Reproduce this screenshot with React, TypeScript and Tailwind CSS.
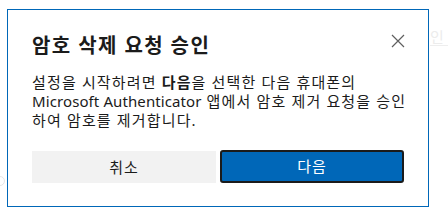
import React from "react";

export default function App() {
  const font = {
    fontFamily: '"Segoe UI", "Noto Sans", "Noto Sans CJK KR", sans-serif',
  };
  return (
    <div
      className="relative w-[448px] h-[218px] bg-white overflow-hidden"
      style={font}
    >
      {/* faint background page bits */}
      <div className="absolute left-[430px] top-[28px] text-[15px] leading-[19px] text-[#ececec]">
        인
      </div>
      <div className="absolute left-[430px] top-[45px] w-[18px] h-px bg-[#eeeeee]" />
      <div className="absolute left-[-5px] top-[176px] w-[10px] h-[10px] rounded-full border border-[#e6e6e6]" />

      <div className="relative pl-[7px] pt-[9px]">
        <div className="box-border w-[422px] h-[198px] border border-[#0067b8] bg-white px-6 pt-[22px] pb-[23px] flex flex-col">
          <div className="flex items-start justify-between h-[28px]">
            <div className="text-[20px] leading-[28px] font-bold text-[#1b1b1b] tracking-[1.4px] whitespace-nowrap">
              암호 삭제 요청 승인
            </div>
            <svg
              width="14"
              height="14"
              viewBox="0 0 14 14"
              className="mt-[2px] mr-[-1px]"
            >
              <path
                d="M1 1 L13 13 M13 1 L1 13"
                stroke="#5f5f5f"
                strokeWidth="1.2"
                fill="none"
              />
            </svg>
          </div>
          <div className="mt-[13px] text-[15px] leading-[19px] text-[#1b1b1b] tracking-[1.15px] whitespace-nowrap">
            설정을 시작하려면 <span className="font-bold">다음</span>을 선택한
            다음 휴대폰의
            <br />
            <span className="tracking-[0.1px]">Microsoft Authenticator</span> 앱에서
            암호 제거 요청을 승인
            <br />
            하여 암호를 제거합니다.
          </div>
          <div className="mt-auto grid grid-cols-2 gap-[4px]">
            <button className="h-[32px] bg-[#f2f2f2] text-[15px] text-[#1b1b1b] tracking-[1px]">
              취소
            </button>
            <button className="h-[33px] -mt-px box-border border-2 border-[#1b1b1b] rounded-[3px] bg-[#0067b8] text-[15px] text-white tracking-[1px]">
              다음
            </button>
          </div>
        </div>
      </div>
    </div>
  );
}
